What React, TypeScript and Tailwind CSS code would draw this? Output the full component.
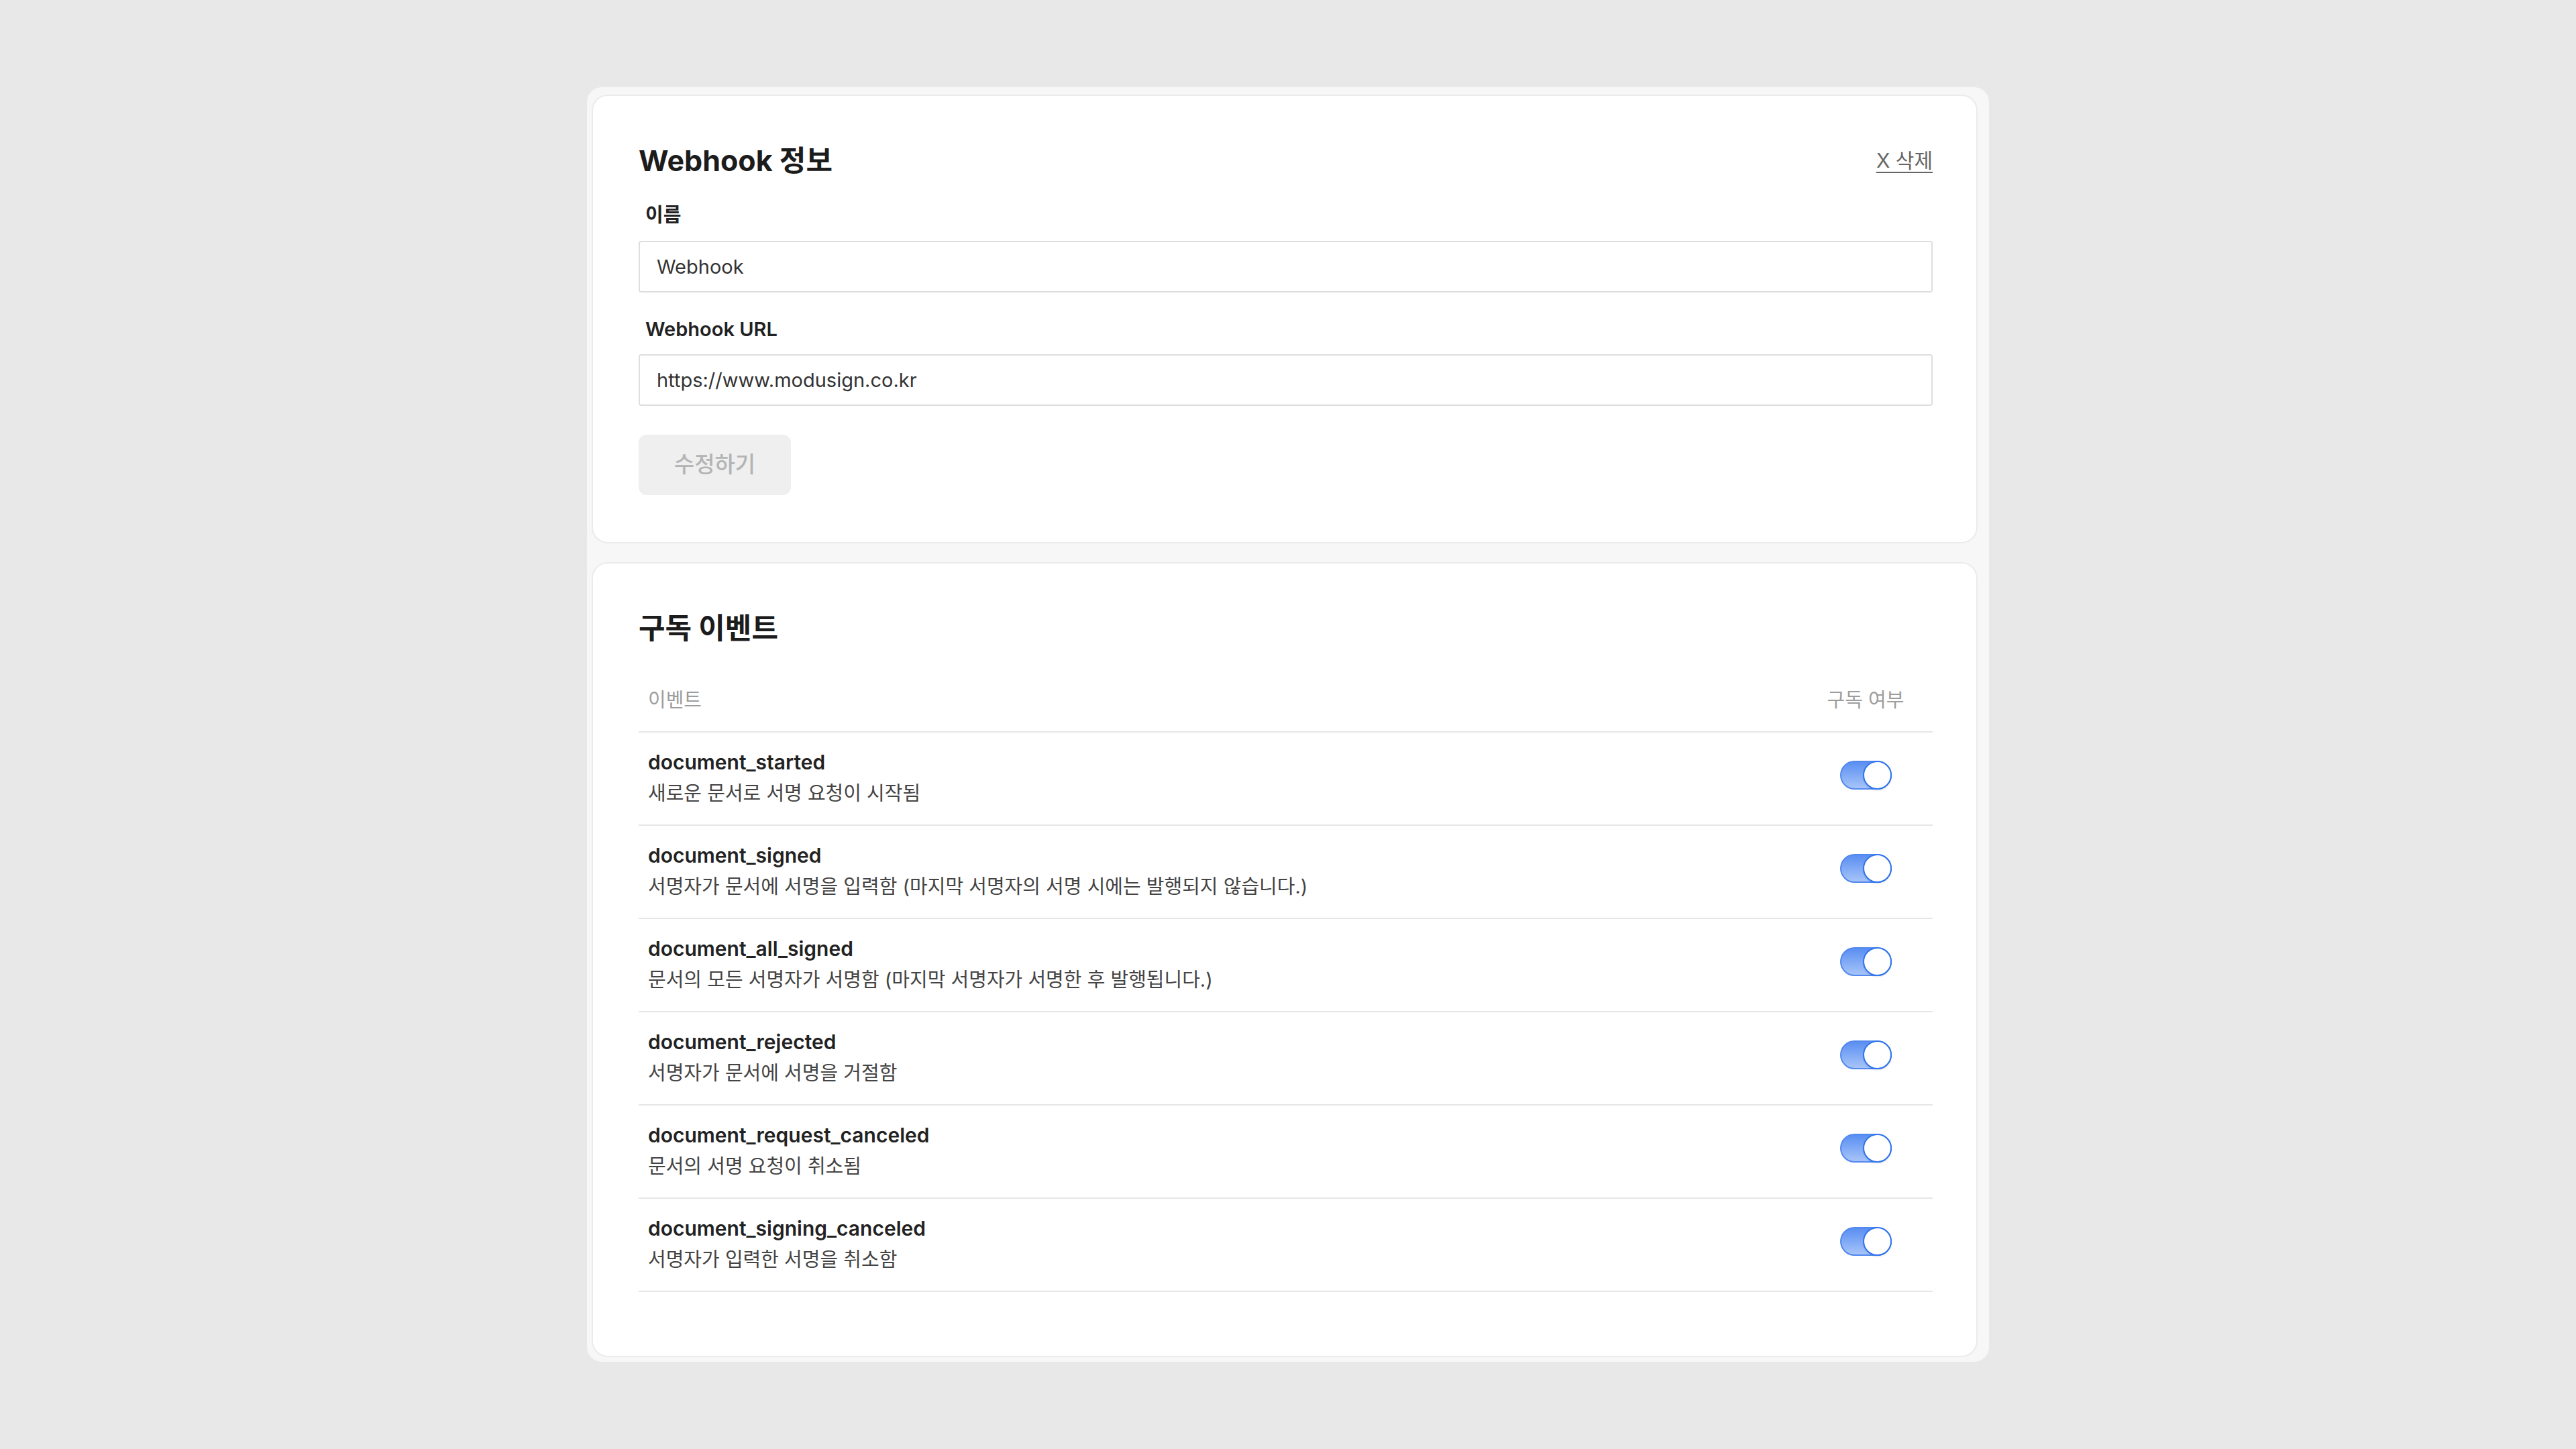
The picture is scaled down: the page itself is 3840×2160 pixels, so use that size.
import { useState } from 'react'

type WebhookEvent = {
  key: string
  description: string
}

const EVENTS: WebhookEvent[] = [
  { key: 'document_started', description: '새로운 문서로 서명 요청이 시작됨' },
  {
    key: 'document_signed',
    description: '서명자가 문서에 서명을 입력함 (마지막 서명자의 서명 시에는 발행되지 않습니다.)',
  },
  {
    key: 'document_all_signed',
    description: '문서의 모든 서명자가 서명함 (마지막 서명자가 서명한 후 발행됩니다.)',
  },
  { key: 'document_rejected', description: '서명자가 문서에 서명을 거절함' },
  { key: 'document_request_canceled', description: '문서의 서명 요청이 취소됨' },
  { key: 'document_signing_canceled', description: '서명자가 입력한 서명을 취소함' },
]

function Toggle({ checked, onChange }: { checked: boolean; onChange: () => void }) {
  return (
    <button
      type="button"
      onClick={onChange}
      className={`flex h-[43px] w-[77px] rounded-full border-2 ${
        checked
          ? 'justify-end border-[#5288ef] bg-gradient-to-b from-[#5a8ef1] to-[#a7c4f8]'
          : 'justify-start border-[#d5d5d5] bg-[#e2e2e2]'
      }`}
    >
      <span
        className={`-m-[2px] h-[43px] w-[43px] rounded-full border-2 bg-white shadow-[0_2px_2px_rgba(0,0,0,0.08)] ${
          checked ? 'border-[#2f74ee]' : 'border-[#cfcfcf]'
        }`}
      />
    </button>
  )
}

export default function App() {
  const [name, setName] = useState('Webhook')
  const [url, setUrl] = useState('https://www.modusign.co.kr')
  const [subscribed, setSubscribed] = useState<Record<string, boolean>>(
    Object.fromEntries(EVENTS.map((e) => [e.key, true]))
  )

  return (
    <div className="flex min-h-screen items-center justify-center bg-[#e8e8e8] font-['Inter','Noto_Sans_CJK_KR',sans-serif]">
      <div className="flex w-[2090px] flex-col gap-[28px] rounded-[22px] bg-[#f7f7f7] pb-[7px] pl-[7px] pr-[17px] pt-[11px]">
        {/* Webhook info */}
        <section className="rounded-[24px] border-2 border-[#ebebeb] bg-white pb-[70px] pl-[68px] pr-[65px] pt-[71px]">
          <div className="flex items-center justify-between">
            <h2 className="text-[43px] font-bold leading-[50px] text-[#1c1c1c]">Webhook 정보</h2>
            <button className="text-[30px] leading-[40px] text-[#666] underline decoration-[2px] underline-offset-[6px]">
              X 삭제
            </button>
          </div>

          <label className="mt-[37px] block pl-[10px] text-[29px] font-semibold leading-[40px] text-[#222]">
            이름
          </label>
          <input
            value={name}
            onChange={(e) => setName(e.target.value)}
            className="mt-[18px] block h-[77px] w-full rounded-[4px] border-2 border-[#dedede] px-[25px] text-[29px] text-[#333] outline-none"
          />

          <label className="mt-[35px] block pl-[10px] text-[29px] font-semibold leading-[40px] text-[#222]">
            Webhook URL
          </label>
          <input
            value={url}
            onChange={(e) => setUrl(e.target.value)}
            className="mt-[17px] block h-[77px] w-full rounded-[4px] border-2 border-[#dedede] px-[25px] text-[29px] text-[#333] outline-none"
          />

          <button
            disabled
            className="mt-[43px] h-[90px] w-[227px] rounded-[12px] bg-[#efefef] text-[33px] font-medium text-[#b4b4b4]"
          >
            수정하기
          </button>
        </section>

        {/* Subscribed events */}
        <section className="rounded-[24px] border-2 border-[#ebebeb] bg-white pb-[95px] pl-[68px] pr-[65px] pt-[71px]">
          <h2 className="text-[43px] font-bold leading-[50px] text-[#1c1c1c]">구독 이벤트</h2>

          <div className="mt-[63px]">
            <div className="flex items-center border-b-2 border-[#e6e6e6] pb-[26px] pl-[14px] text-[29px] leading-[40px] text-[#9d9d9d]">
              <span className="flex-1">이벤트</span>
              <span className="w-[200px] text-center">구독 여부</span>
            </div>

            {EVENTS.map((ev) => (
              <div
                key={ev.key}
                className="flex items-center border-b-2 border-[#e6e6e6] pb-[26px] pl-[14px] pt-[24px]"
              >
                <div className="flex-1">
                  <div className="text-[30px] font-semibold leading-[40px] text-[#222]">{ev.key}</div>
                  <div className="mt-[7px] text-[29px] leading-[40px] text-[#444]">{ev.description}</div>
                </div>
                <div className="mb-[8px] flex w-[200px] justify-center">
                  <Toggle
                    checked={subscribed[ev.key]}
                    onChange={() => setSubscribed((prev) => ({ ...prev, [ev.key]: !prev[ev.key] }))}
                  />
                </div>
              </div>
            ))}
          </div>
        </section>
      </div>
    </div>
  )
}
